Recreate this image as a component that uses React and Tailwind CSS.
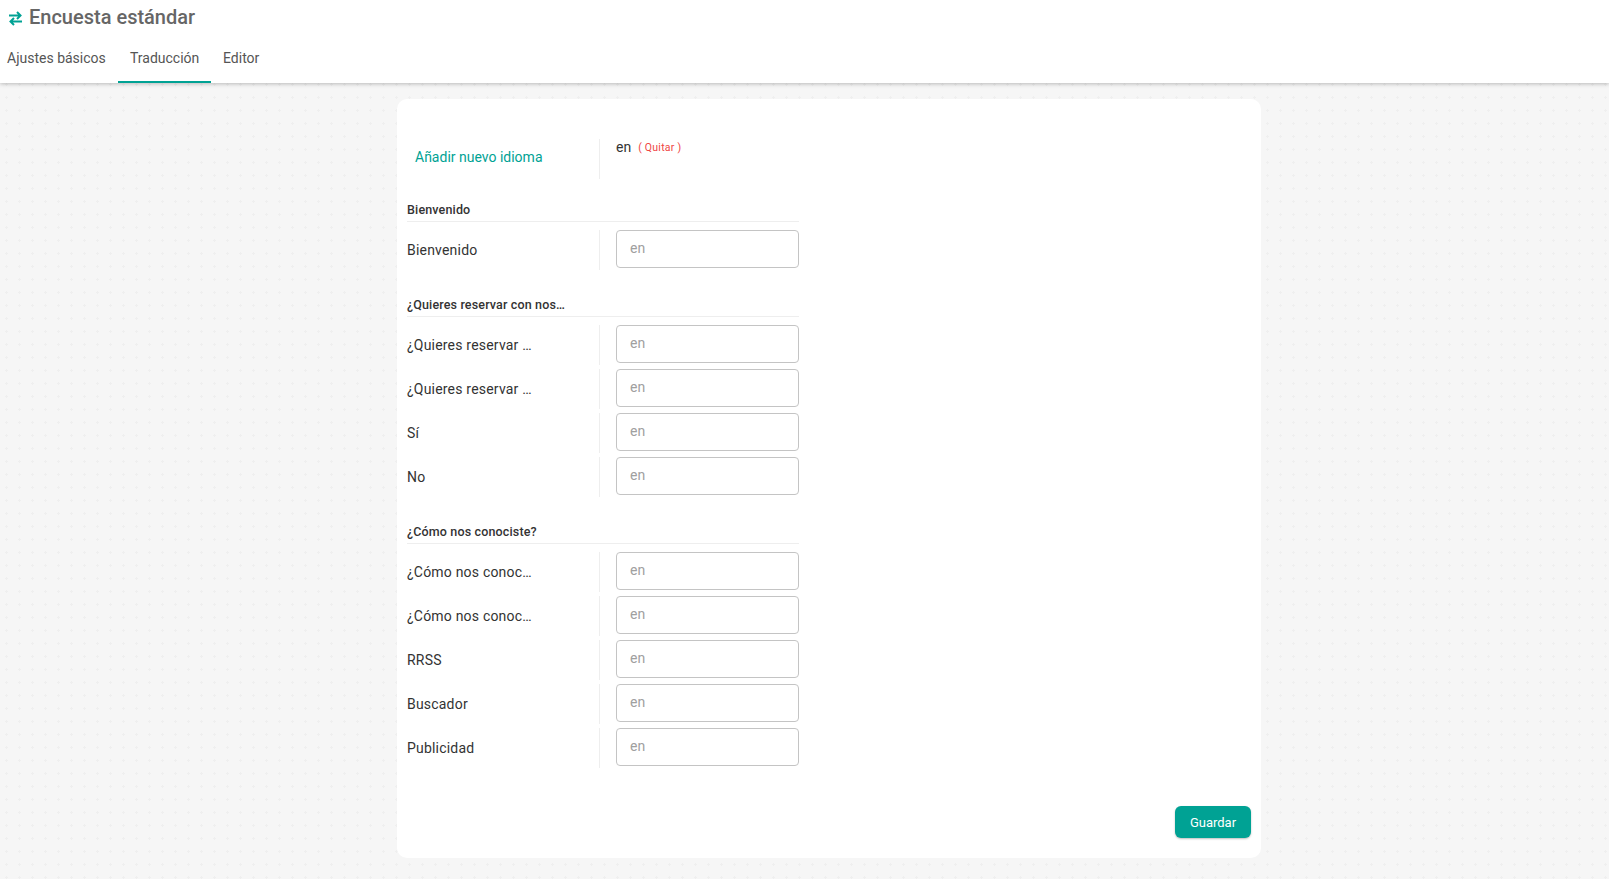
import React from "react";

const font = { fontFamily: "Roboto, sans-serif" };

function Row({ label }) {
  return (
    <div className="flex h-[40px] mb-[4px]">
      <div className="w-[193px] h-[40px] border-r border-[#eeeeee] flex items-center text-[14px] text-[#333333] whitespace-nowrap tracking-[0.2px]">
        {label}
      </div>
      <div className="ml-[16px] w-[183px] h-[38px] border border-[#c4c4c4] rounded-[4px] flex items-center pl-[13px] pb-[1px] text-[14px] text-[#a0a0a0] bg-white">
        en
      </div>
    </div>
  );
}

function Section({ title, rows, className }) {
  return (
    <div className={className}>
      <div className="w-[392px] h-[22px] border-b border-[#eeeeee] text-[12.5px] tracking-[0.15px] font-medium text-[#333333] leading-[20px] mb-[8px]">
        {title}
      </div>
      {rows.map((r, i) => (
        <Row key={i} label={r} />
      ))}
    </div>
  );
}

export default function App() {
  return (
    <div
      style={font}
      className="w-[1609px] h-[879px] overflow-hidden flex flex-col bg-[#f6f6f6] bg-[radial-gradient(#efefef_1px,transparent_1.2px)] bg-[size:13px_13px]"
    >
      <header className="h-[83px] shrink-0 bg-white shadow-[0_1px_4px_rgba(0,0,0,0.25)] relative">
        <div className="h-[34px] pl-[9px] flex items-center gap-[7px]">
          <svg width="13" height="15" viewBox="0 0 13 15" fill="none" stroke="#00a294" strokeWidth="2" className="mt-[2px]">
            <path d="M0 4.5H11.5M8 1L11.5 4.5L8 8" />
            <path d="M13 10.5H1.5M5 7L1.5 10.5L5 14" />
          </svg>
          <span className="text-[20px] font-medium text-[#666666] leading-[34px]">Encuesta estándar</span>
        </div>
        <nav className="flex h-[49px] text-[14px] text-[#555555]">
          <div className="px-[7px] w-[118px] pt-[14px]">Ajustes básicos</div>
          <div className="w-[93px] pl-[12px] pt-[14px] border-b-2 border-[#00a294]">Traducción</div>
          <div className="pl-[12px] pt-[14px]">Editor</div>
        </nav>
      </header>
      <main className="ml-[397px] mt-[16px] w-[864px] h-[759px] bg-white rounded-[10px] pl-[10px] pr-[10px] pt-[40px] flex flex-col">
        <div className="flex h-[40px]">
          <div className="w-[193px] h-[40px] border-r border-[#eeeeee] flex items-center pl-[8px] pb-[4px] text-[14px] text-[#00a294]">
            Añadir nuevo idioma
          </div>
          <div className="ml-[16px] flex items-start gap-[7px] text-[14px] text-[#333333] leading-[16px]">
            <span>en</span>
            <span className="text-[10.5px] text-[#ef4444] tracking-[0.25px] leading-[18px]">( Quitar )</span>
          </div>
        </div>
        <Section className="mt-[21px]" title="Bienvenido" rows={["Bienvenido"]} />
        <Section
          className="mt-[21px]"
          title="¿Quieres reservar con nos…"
          rows={["¿Quieres reservar …", "¿Quieres reservar …", "Sí", "No"]}
        />
        <Section
          className="mt-[21px]"
          title="¿Cómo nos conociste?"
          rows={["¿Cómo nos conoc…", "¿Cómo nos conoc…", "RRSS", "Buscador", "Publicidad"]}
        />
        <div className="flex justify-end mt-[34px]">
          <button className="w-[76px] h-[32px] rounded-[6px] bg-[#00a294] text-white text-[13px] pt-[1px] shadow-[0_1px_2px_rgba(0,0,0,0.25)]">
            Guardar
          </button>
        </div>
      </main>
    </div>
  );
}
